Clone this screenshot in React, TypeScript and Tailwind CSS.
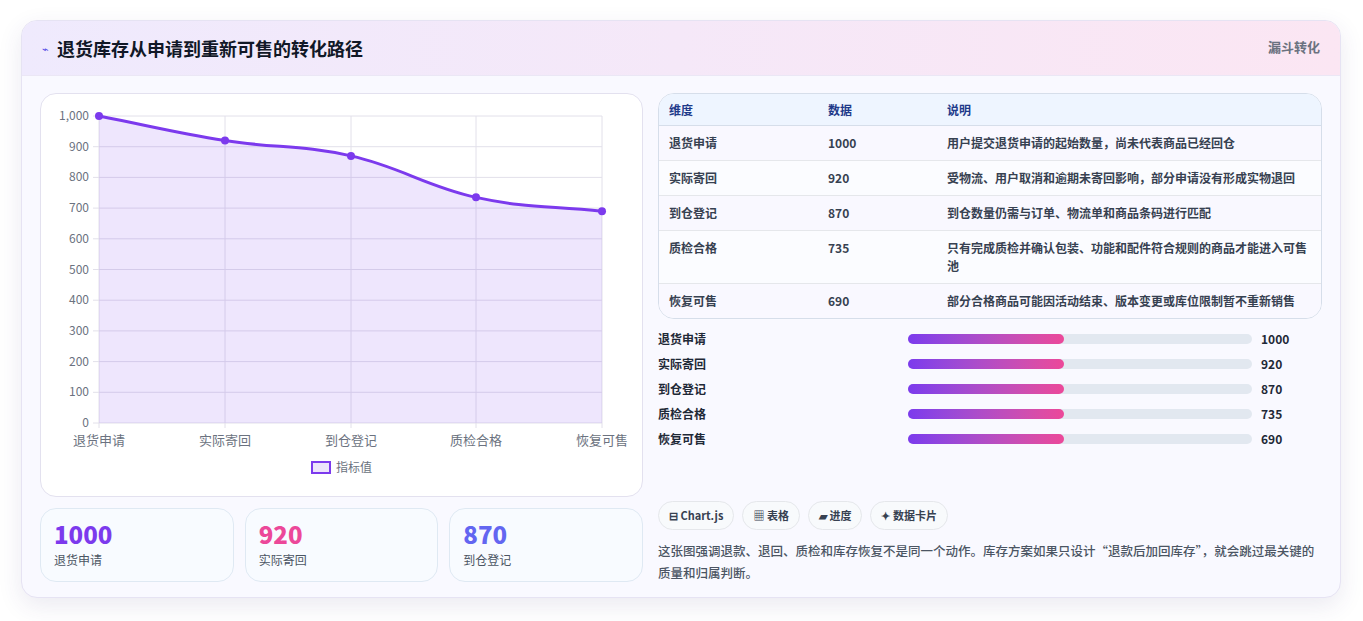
const rows = [
  { name: '退货申请', value: 1000, note: '用户提交退货申请的起始数量，尚未代表商品已经回仓' },
  { name: '实际寄回', value: 920, note: '受物流、用户取消和逾期未寄回影响，部分申请没有形成实物退回' },
  { name: '到仓登记', value: 870, note: '到仓数量仍需与订单、物流单和商品条码进行匹配' },
  { name: '质检合格', value: 735, note: '只有完成质检并确认包装、功能和配件符合规则的商品才能进入可售池' },
  { name: '恢复可售', value: 690, note: '部分合格商品可能因活动结束、版本变更或库位限制暂不重新销售' },
]

const font = { fontFamily: '"Noto Sans CJK SC", "Liberation Sans", sans-serif' }

function Chart() {
  const xs = [58, 184, 310, 435, 561]
  const top = 22
  const bottom = 329
  const y = (v: number) => bottom - (v / 1000) * (bottom - top)
  const pts = rows.map((r, i) => [xs[i], y(r.value)])
  let d = `M${pts[0][0]},${pts[0][1]}`
  for (let i = 1; i < pts.length; i++) {
    const [x0, y0] = pts[i - 1]
    const [x1, y1] = pts[i]
    const cx = (x1 - x0) * 0.4
    const prevSlope = i > 1 ? (y1 - pts[i - 2][1]) / (x1 - pts[i - 2][0]) : (y1 - y0) / (x1 - x0)
    const nextSlope = i < pts.length - 1 ? (pts[i + 1][1] - y0) / (pts[i + 1][0] - x0) : (y1 - y0) / (x1 - x0)
    d += ` C${x0 + cx},${y0 + prevSlope * cx} ${x1 - cx},${y1 - nextSlope * cx} ${x1},${y1}`
  }
  const area = `${d} L${xs[4]},${bottom} L${xs[0]},${bottom} Z`
  const ticks = [0, 100, 200, 300, 400, 500, 600, 700, 800, 900, 1000]
  return (
    <svg width="602" height="403" className="block">
      {ticks.map((t) => (
        <g key={t}>
          <line x1={52} x2={561} y1={y(t)} y2={y(t)} stroke="#e2e0ea" />
          <text x={48} y={y(t) + 4} textAnchor="end" fontSize="12" fill="#6b7280" style={font}>
            {t === 1000 ? '1,000' : t}
          </text>
        </g>
      ))}
      {xs.map((x, i) => (
        <g key={x}>
          <line x1={x} x2={x} y1={top} y2={bottom + 5} stroke="#e2e0ea" />
          <text x={x} y={351} textAnchor="middle" fontSize="13" fill="#6b7280" style={font}>
            {rows[i].name}
          </text>
        </g>
      ))}
      <path d={area} fill="#7c3aed" fillOpacity="0.13" />
      <path d={d} fill="none" stroke="#7c3aed" strokeWidth="3" />
      {pts.map(([px, py]) => (
        <circle key={px} cx={px} cy={py} r="4" fill="#7c3aed" />
      ))}
      <rect x={271} y={368} width={18} height={11} fill="#ede4fb" stroke="#7c3aed" strokeWidth="2" />
      <text x={295} y={378} fontSize="12" fill="#6b7280" style={font}>指标值</text>
    </svg>
  )
}

export default function App() {
  return (
    <div className="min-h-[621px] bg-white px-[21px] pt-[20px]" style={font}>
      <div className="w-[1320px] h-[578px] overflow-hidden rounded-2xl border border-[#e6e3f3] bg-[#f9f9ff] shadow-[0_8px_24px_rgba(60,50,120,0.10)]">
        <div className="flex h-[55px] items-center justify-between bg-gradient-to-r from-[#efeafd] to-[#fbe6f3] pl-[20px] pr-[20px] border-b border-[#ebe7f5]">
          <div className="flex items-center gap-2">
            <span className="text-[11px] text-[#4f46e5]">⌁</span>
            <span className="text-[18px] font-bold text-[#111827]">退货库存从申请到重新可售的转化路径</span>
          </div>
          <span className="self-start mt-[16px] text-[13px] font-semibold text-[#6b7280]">漏斗转化</span>
        </div>
        <div className="flex gap-[15px] px-[18px] pt-[17px]">
          <div className="w-[603px] flex flex-col gap-[11px]">
            <div className="h-[404px] rounded-2xl border border-[#e3e1ef] bg-white">
              <Chart />
            </div>
            <div className="grid grid-cols-3 gap-[11px]">
              {rows.slice(0, 3).map((r, i) => (
                <div key={r.name} className="h-[74px] rounded-2xl border border-[#dfe9f3] bg-[#f8fbff] px-[13px] pt-[10px]">
                  <div className={`text-[24px] font-extrabold leading-[30px] ${['text-[#7c3aed]', 'text-[#ec4899]', 'text-[#6366f1]'][i]}`}>{r.value}</div>
                  <div className="text-[12px] text-[#4b5563] mt-[2px]">{r.name}</div>
                </div>
              ))}
            </div>
          </div>
          <div className="w-[667px]">
            <div className="overflow-hidden rounded-2xl border border-[#d6deea] bg-white text-[12px]">
              <div className="grid grid-cols-[159px_119px_1fr] h-[32px] items-center bg-[#eef5ff] px-[10px] font-semibold text-[#1e3a8a] border-b border-[#d6deea]">
                <span>维度</span><span>数据</span><span>说明</span>
              </div>
              {rows.map((r, i) => (
                <div key={r.name} className={`grid grid-cols-[159px_119px_1fr] px-[10px] py-[8px] leading-[18px] font-semibold text-[#374151] ${i < 4 ? 'border-b border-[#e5e7eb]' : ''} ${i % 2 === 0 ? 'bg-[#f9f8ff]' : 'bg-[#fbfcff]'}`}>
                  <span>{r.name}</span><span>{r.value}</span><span>{r.note}</span>
                </div>
              ))}
            </div>
            <div className="mt-[11px] flex flex-col gap-[8px]">
              {rows.map((r) => (
                <div key={r.name} className="flex h-[17px] items-center text-[12px] font-semibold text-[#1f2937]">
                  <span className="w-[250px]">{r.name}</span>
                  <div className="h-[10px] w-[344px] rounded-full bg-[#e2e8f0]">
                    <div className="h-full w-[156px] rounded-full bg-gradient-to-r from-[#7c3aed] to-[#ec4899]" />
                  </div>
                  <span className="ml-[9px]">{r.value}</span>
                </div>
              ))}
            </div>
            <div className="mt-[54px] flex gap-[8px]">
              {['⊟ Chart.js', '▦ 表格', '▰ 进度', '✦ 数据卡片'].map((c) => (
                <span key={c} className="rounded-full border border-[#e5e7eb] bg-[#f8fafc] px-[10px] py-[5px] text-[11px] font-semibold text-[#374151]">{c}</span>
              ))}
            </div>
            <p className="mt-[10px] text-[12.5px] leading-[22px] font-medium text-[#4b5563]">
              这张图强调退款、退回、质检和库存恢复不是同一个动作。库存方案如果只设计“退款后加回库存”，就会跳过最关键的质量和归属判断。
            </p>
          </div>
        </div>
      </div>
    </div>
  )
}
